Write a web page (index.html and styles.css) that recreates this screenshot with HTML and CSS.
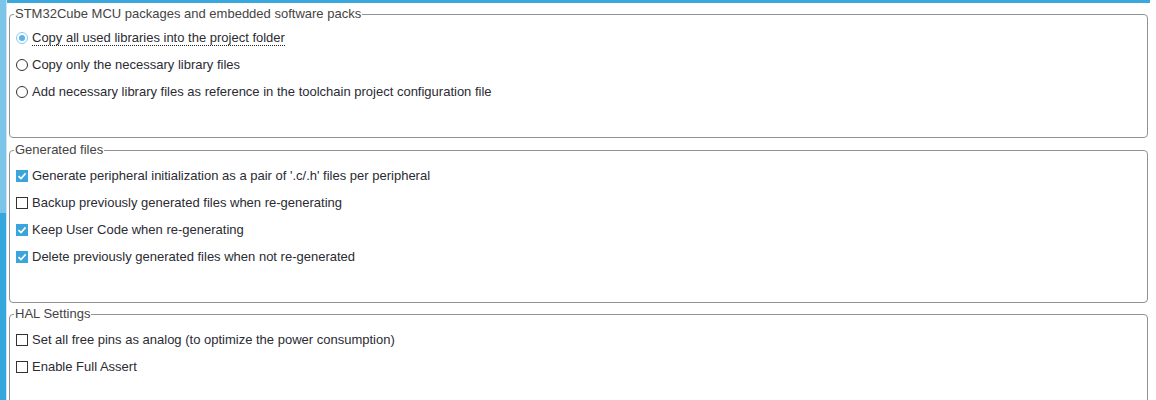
FILE: index.html
```html
<!DOCTYPE html>
<html>
<head>
<meta charset="utf-8">
<link rel="stylesheet" href="styles.css">
</head>
<body>
<div class="page">
  <div class="side"><div class="side-top"></div><div class="side-bottom"></div></div>
  <div class="main">
    <div class="topbar"></div>
    <fieldset class="group g1">
      <legend>STM32Cube MCU packages and embedded software packs</legend>
      <div class="rows">
        <label class="row"><span class="radio on"><span class="dot"></span></span><span class="text focus">Copy all used libraries into the project folder</span></label>
        <label class="row"><span class="radio"></span><span class="text">Copy only the necessary library files</span></label>
        <label class="row"><span class="radio"></span><span class="text">Add necessary library files as reference in the toolchain project configuration file</span></label>
      </div>
    </fieldset>
    <fieldset class="group g2">
      <legend>Generated files</legend>
      <div class="rows">
        <label class="row"><span class="check on"><svg viewBox="0 0 12 12" width="12" height="12"><path d="M2.5 6.2 L5 8.6 L9.6 3.4" fill="none" stroke="#fff" stroke-width="1.6"/></svg></span><span class="text">Generate peripheral initialization as a pair of '.c/.h' files per peripheral</span></label>
        <label class="row"><span class="check"></span><span class="text">Backup previously generated files when re-generating</span></label>
        <label class="row"><span class="check on"><svg viewBox="0 0 12 12" width="12" height="12"><path d="M2.5 6.2 L5 8.6 L9.6 3.4" fill="none" stroke="#fff" stroke-width="1.6"/></svg></span><span class="text">Keep User Code when re-generating</span></label>
        <label class="row"><span class="check on"><svg viewBox="0 0 12 12" width="12" height="12"><path d="M2.5 6.2 L5 8.6 L9.6 3.4" fill="none" stroke="#fff" stroke-width="1.6"/></svg></span><span class="text">Delete previously generated files when not re-generated</span></label>
      </div>
    </fieldset>
    <fieldset class="group g3">
      <legend>HAL Settings</legend>
      <div class="rows">
        <label class="row"><span class="check"></span><span class="text">Set all free pins as analog (to optimize the power consumption)</span></label>
        <label class="row"><span class="check"></span><span class="text">Enable Full Assert</span></label>
      </div>
    </fieldset>
  </div>
</div>
</body>
</html>
```

FILE: styles.css
```css
html, body {
  margin: 0;
  padding: 0;
  background: #fff;
  height: 400px;
  overflow: hidden;
}
body {
  font-family: "Liberation Sans", Arial, sans-serif;
  color: #333;
}
.page {
  display: flex;
  width: 1156px;
  height: 400px;
  overflow: hidden;
}
.side {
  width: 6px;
  display: flex;
  flex-direction: column;
  border-right: 1px solid #cfe3ef;
  flex: none;
}
.side-top {
  height: 213px;
  background: #7dc4e9;
}
.side-bottom {
  flex: 1;
  background: #36a7dc;
}
.main {
  width: 1143px;
  display: flex;
  flex-direction: column;
}
.topbar {
  height: 3px;
  background: #3aa8dc;
  flex: none;
}
.group {
  margin: 3px 2px 0 2px;
  padding: 0 0 0 6px;
  border: 1px solid #8e9397;
  border-radius: 4px;
  min-width: 0;
  flex: none;
}
.group legend {
  font-size: 13px;
  line-height: 16px;
  color: #444;
  padding: 0 1px;
  margin-left: -2px;
}
.rows {
  display: flex;
  flex-direction: column;
  box-sizing: border-box;
}
.row {
  display: flex;
  align-items: center;
  height: 27px;
  gap: 4px;
  font-size: 13px;
  color: #2b2b33;
}
.g1 .rows { padding-top: 2px; height: 115px; }
.g2 { margin-top: 4px; }
.g2 .rows { padding-top: 4px; height: 144px; }
.g3 { margin-top: 3px; }
.g3 .rows { padding-top: 4px; height: 100px; }
.radio {
  width: 10px;
  height: 10px;
  border: 1px solid #333;
  border-radius: 50%;
  display: flex;
  align-items: center;
  justify-content: center;
  flex: none;
  background: #fff;
}
.radio.on {
  border-color: #8ccaee;
}
.radio .dot {
  width: 6px;
  height: 6px;
  border-radius: 50%;
  background: #58b5e5;
}
.check {
  width: 10px;
  height: 10px;
  border: 1px solid #333;
  flex: none;
  display: flex;
  background: #fff;
}
.check.on {
  background: #3aa4dc;
  border-color: #3aa4dc;
}
.check svg {
  margin: -1px;
}
.text {
  white-space: nowrap;
}
.text.focus {
  border-bottom: 1px dotted #222;
  line-height: 14px;
  margin-top: 2px;
}
```
